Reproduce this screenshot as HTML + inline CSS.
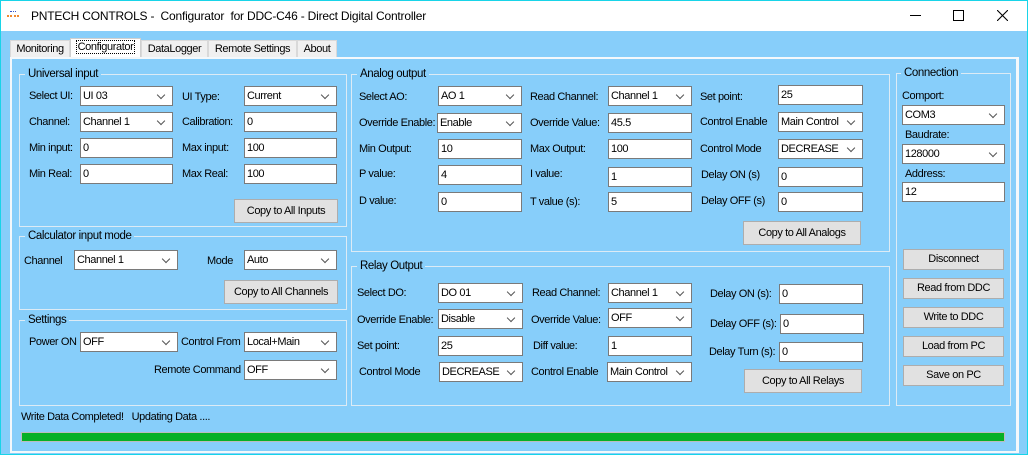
<!DOCTYPE html>
<html><head><meta charset="utf-8"><style>
*{box-sizing:border-box;margin:0;padding:0}
body{width:1028px;height:455px;overflow:hidden;background:#87cefa;font-family:"Liberation Sans",sans-serif;font-size:11px;letter-spacing:-0.4px;color:#000;position:relative}
.a{position:absolute}
#tb{left:0;top:0;width:1028px;height:31px;background:#fff;border:1px solid #18d4e8;border-bottom:none}
#frame{left:0;top:0;width:1028px;height:455px;border:1px solid #18d4e8}
.t{position:absolute;white-space:nowrap;line-height:16px;height:16px}
.i,.c{position:absolute;background:#fff;border:1px solid #7a7a7a;height:20px;line-height:18px;padding-left:2px;white-space:nowrap;overflow:hidden}
.c::after{content:"";position:absolute;right:8px;top:5px;width:5px;height:5px;border-right:1px solid #555;border-bottom:1px solid #555;transform:rotate(45deg);background:#fff}
.b{position:absolute;background:#e1e1e1;border:1px solid #adadad;text-align:center;line-height:22px;height:24px;white-space:nowrap}
.g{position:absolute;border:1px solid #dcebf5}
.gt{position:absolute;background:#87cefa;padding:0 3px;line-height:14px;white-space:nowrap;font-size:11.5px}
.tab{position:absolute;top:40px;height:18px;background:#f0f0f0;border:1px solid #d9d9d9;border-bottom:none;line-height:17px;text-align:center;white-space:nowrap}
</style></head><body>
<div id="tb" class="a"></div>
<div class="a" style="left:7px;top:9px;width:12px;height:14px">
<div class="a" style="left:3px;top:2px;width:6px;height:1px;border-top:1px dotted #3a55c8"></div>
<div class="a" style="left:0;top:6px;width:12px;height:2px;border-top:2px dotted #f08a30"></div></div>
<div class="t" style="left:31px;top:8px;font-size:12px;letter-spacing:-0.2px">PNTECH CONTROLS -&nbsp; Configurator&nbsp; for DDC-C46 - Direct Digital Controller</div>
<div class="a" style="left:910px;top:15px;width:11px;height:1px;background:#000"></div>
<div class="a" style="left:953px;top:10px;width:11px;height:11px;border:1px solid #000"></div>
<svg class="a" style="left:997px;top:10px" width="11" height="11"><path d="M0 0L11 11M11 0L0 11" stroke="#000" stroke-width="1.1"/></svg>

<div class="tab" style="left:10px;width:60px">Monitoring</div>
<div class="tab" style="left:70px;top:38px;height:20px;width:71px;background:#fff;border-color:#d0d0d0"><span style="border:1px dotted #000;padding:0 1px">Configurator</span></div>
<div class="tab" style="left:141px;width:67px">DataLogger</div>
<div class="tab" style="left:208px;width:89px">Remote Settings</div>
<div class="tab" style="left:297px;width:40px">About</div>
<div class="a" style="left:10px;top:57px;width:1009px;height:396px;border:2px solid #f4f8fb;border-right-width:3px"></div>

<!-- Universal input -->
<div class="g" style="left:19px;top:74px;width:328px;height:153px"></div>
<div class="gt" style="left:25px;top:67px">Universal input</div>
<div class="t" style="left:29px;top:88px">Select UI:</div><div class="c" style="left:80px;top:86px;width:93px">UI 03</div>
<div class="t" style="left:182px;top:89px">UI Type:</div><div class="c" style="left:244px;top:86px;width:93px">Current</div>
<div class="t" style="left:29px;top:114px">Channel:</div><div class="c" style="left:80px;top:112px;width:93px">Channel 1</div>
<div class="t" style="left:182px;top:114px">Calibration:</div><div class="i" style="left:244px;top:112px;width:93px">0</div>
<div class="t" style="left:29px;top:140px">Min input:</div><div class="i" style="left:80px;top:138px;width:93px">0</div>
<div class="t" style="left:182px;top:140px">Max input:</div><div class="i" style="left:244px;top:138px;width:93px">100</div>
<div class="t" style="left:29px;top:166px">Min Real:</div><div class="i" style="left:80px;top:164px;width:93px">0</div>
<div class="t" style="left:182px;top:166px">Max Real:</div><div class="i" style="left:244px;top:164px;width:93px">100</div>
<div class="b" style="left:234px;top:199px;width:104px">Copy to All Inputs</div>

<!-- Calculator -->
<div class="g" style="left:19px;top:236px;width:328px;height:74px"></div>
<div class="gt" style="left:25px;top:229px">Calculator input mode</div>
<div class="t" style="left:24px;top:253px">Channel</div><div class="c" style="left:74px;top:250px;width:104px">Channel 1</div>
<div class="t" style="left:207px;top:253px">Mode</div><div class="c" style="left:244px;top:250px;width:93px">Auto</div>
<div class="b" style="left:224px;top:280px;width:114px">Copy to All Channels</div>

<!-- Settings -->
<div class="g" style="left:19px;top:320px;width:328px;height:86px"></div>
<div class="gt" style="left:25px;top:313px">Settings</div>
<div class="t" style="left:29px;top:334px">Power ON</div><div class="c" style="left:80px;top:332px;width:98px">OFF</div>
<div class="t" style="left:181px;top:334px">Control From</div><div class="c" style="left:244px;top:332px;width:93px">Local+Main</div>
<div class="t" style="left:154px;top:362px">Remote Command</div><div class="c" style="left:244px;top:360px;width:93px">OFF</div>

<!-- Analog -->
<div class="g" style="left:351px;top:74px;width:539px;height:178px"></div>
<div class="gt" style="left:357px;top:67px">Analog output</div>
<div class="t" style="left:359px;top:89px">Select AO:</div><div class="c" style="left:438px;top:86px;width:84px">AO 1</div>
<div class="t" style="left:530px;top:89px">Read Channel:</div><div class="c" style="left:608px;top:86px;width:84px">Channel 1</div>
<div class="t" style="left:700px;top:89px">Set point:</div><div class="i" style="left:778px;top:85px;width:85px">25</div>
<div class="t" style="left:359px;top:115px">Override Enable:</div><div class="c" style="left:437px;top:113px;width:85px">Enable</div>
<div class="t" style="left:530px;top:115px">Override Value:</div><div class="i" style="left:608px;top:113px;width:84px">45.5</div>
<div class="t" style="left:700px;top:114px">Control Enable</div><div class="c" style="left:778px;top:112px;width:85px">Main Control</div>
<div class="t" style="left:359px;top:141px">Min Output:</div><div class="i" style="left:438px;top:139px;width:84px">10</div>
<div class="t" style="left:530px;top:141px">Max Output:</div><div class="i" style="left:608px;top:139px;width:84px">100</div>
<div class="t" style="left:700px;top:141px">Control Mode</div><div class="c" style="left:778px;top:139px;width:85px">DECREASE</div>
<div class="t" style="left:359px;top:166px">P value:</div><div class="i" style="left:438px;top:165px;width:84px">4</div>
<div class="t" style="left:530px;top:166px">I value:</div><div class="i" style="left:608px;top:167px;width:84px">1</div>
<div class="t" style="left:701px;top:167px">Delay ON (s)</div><div class="i" style="left:778px;top:167px;width:85px">0</div>
<div class="t" style="left:359px;top:193px">D value:</div><div class="i" style="left:438px;top:192px;width:84px">0</div>
<div class="t" style="left:530px;top:194px">T value (s):</div><div class="i" style="left:608px;top:192px;width:84px">5</div>
<div class="t" style="left:701px;top:193px">Delay OFF (s)</div><div class="i" style="left:778px;top:192px;width:85px">0</div>
<div class="b" style="left:743px;top:221px;width:118px">Copy to All Analogs</div>

<!-- Relay -->
<div class="g" style="left:351px;top:266px;width:539px;height:140px"></div>
<div class="gt" style="left:357px;top:259px">Relay Output</div>
<div class="t" style="left:357px;top:285px">Select DO:</div><div class="c" style="left:438px;top:283px;width:85px">DO 01</div>
<div class="t" style="left:532px;top:285px">Read Channel:</div><div class="c" style="left:608px;top:283px;width:84px">Channel 1</div>
<div class="t" style="left:710px;top:286px">Delay ON (s):</div><div class="i" style="left:779px;top:284px;width:84px">0</div>
<div class="t" style="left:357px;top:312px">Override Enable:</div><div class="c" style="left:438px;top:309px;width:85px">Disable</div>
<div class="t" style="left:531px;top:312px">Override Value:</div><div class="c" style="left:608px;top:308px;width:84px">OFF</div>
<div class="t" style="left:710px;top:316px">Delay OFF (s):</div><div class="i" style="left:780px;top:314px;width:84px">0</div>
<div class="t" style="left:357px;top:338px">Set point:</div><div class="i" style="left:438px;top:336px;width:85px">25</div>
<div class="t" style="left:533px;top:338px">Diff value:</div><div class="i" style="left:608px;top:336px;width:84px">1</div>
<div class="t" style="left:709px;top:344px">Delay Turn (s):</div><div class="i" style="left:779px;top:342px;width:84px">0</div>
<div class="t" style="left:359px;top:364px">Control Mode</div><div class="c" style="left:439px;top:362px;width:84px">DECREASE</div>
<div class="t" style="left:531px;top:364px">Control Enable</div><div class="c" style="left:607px;top:362px;width:85px">Main Control</div>
<div class="b" style="left:744px;top:369px;width:118px">Copy to All Relays</div>

<!-- Connection -->
<div class="g" style="left:896px;top:73px;width:115px;height:333px"></div>
<div class="gt" style="left:901px;top:66px">Connection</div>
<div class="t" style="left:902px;top:88px">Comport:</div><div class="c" style="left:902px;top:105px;width:103px">COM3</div>
<div class="t" style="left:905px;top:127px">Baudrate:</div><div class="c" style="left:902px;top:144px;width:103px">128000</div>
<div class="t" style="left:905px;top:166px">Address:</div><div class="i" style="left:902px;top:182px;width:103px">12</div>
<div class="b" style="left:903px;top:249px;width:101px;height:21px;line-height:19px">Disconnect</div>
<div class="b" style="left:903px;top:278px;width:101px;height:21px;line-height:19px">Read from DDC</div>
<div class="b" style="left:903px;top:307px;width:101px;height:21px;line-height:19px">Write to DDC</div>
<div class="b" style="left:903px;top:336px;width:101px;height:21px;line-height:19px">Load from PC</div>
<div class="b" style="left:903px;top:365px;width:101px;height:21px;line-height:19px">Save on PC</div>

<div class="t" style="left:21px;top:409px">Write Data Completed!&nbsp;&nbsp; Updating Data ....</div>
<div class="a" style="left:21px;top:432px;width:984px;height:10px;background:#06b025;border:1px solid #bcbcbc"></div>
<div id="frame" class="a"></div>
</body></html>
